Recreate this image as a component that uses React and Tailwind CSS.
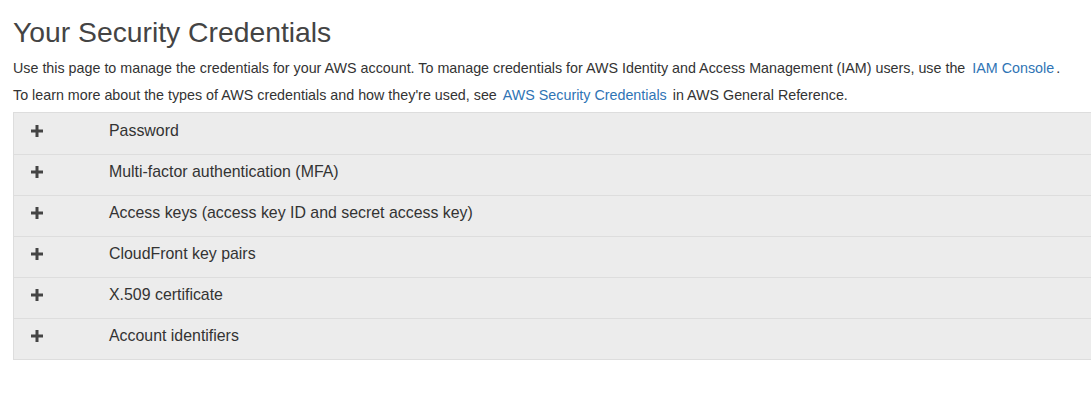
const sections = [
  'Password',
  'Multi-factor authentication (MFA)',
  'Access keys (access key ID and secret access key)',
  'CloudFront key pairs',
  'X.509 certificate',
  'Account identifiers',
];

function PlusIcon() {
  return (
    <svg width="12" height="12" viewBox="0 0 12 12" className="block">
      <path d="M4.5 0h3v4.5H12v3H7.5V12h-3V7.5H0v-3h4.5z" fill="#444" />
    </svg>
  );
}

export default function App() {
  return (
    <div className="min-h-[402px] bg-white pl-[13px] font-['Liberation_Sans',Arial,sans-serif] text-[#444]">
      <h1 className="pt-[13px] text-[28.3px] leading-[38px] font-normal">Your Security Credentials</h1>
      <p className="mt-[7px] text-[14.3px] leading-[20px] text-[#333]">
        Use this page to manage the credentials for your AWS account. To manage credentials for AWS Identity and Access Management (IAM) users, use the{' '}
        <a href="#" className="ml-[3px] mr-[2px] text-[#2f74b5]">IAM Console</a>.
      </p>
      <p className="mt-[7px] text-[14.3px] leading-[20px] text-[#333]">
        To learn more about the types of AWS credentials and how they're used, see{' '}
        <a href="#" className="ml-[2px] mr-[2px] text-[#2f74b5]">AWS Security Credentials</a> in AWS General Reference.
      </p>
      <div className="mt-[7px] border-t border-l border-b border-[#dddddd] bg-[#ececec]">
        {sections.map((label, i) => (
          <div
            key={label}
            className={`flex h-[41px] items-center ${i > 0 ? 'border-t border-[#dddddd]' : ''}`}
          >
            <div className="w-[95px] pb-[6px] pl-[17px]">
              <PlusIcon />
            </div>
            <span className="pb-[6px] text-[15.9px] text-[#333]">{label}</span>
          </div>
        ))}
      </div>
    </div>
  );
}
